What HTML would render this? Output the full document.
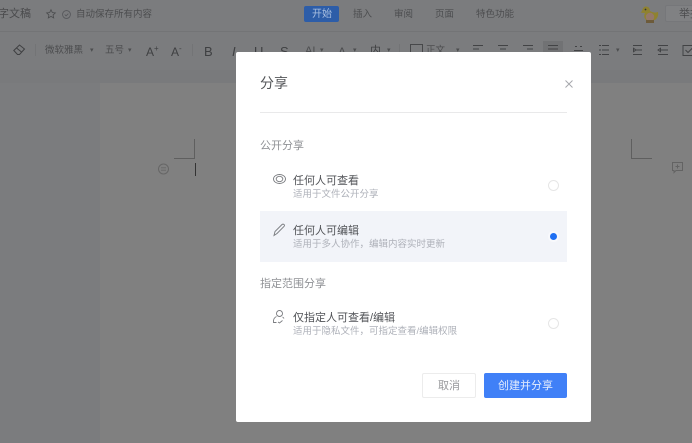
<!DOCTYPE html>
<html lang="zh"><head><meta charset="utf-8"><title>分享</title>
<style>
html,body{margin:0;padding:0;width:692px;height:443px;overflow:hidden;background:#7b7c7e}
body{position:relative;font-family:"Liberation Sans","Noto Sans CJK SC",sans-serif}
.t{position:absolute;white-space:nowrap;line-height:1}
.d{color:#4c4d4f}
svg{position:absolute;overflow:visible}
.m{position:absolute;left:236px;top:52px;width:355px;height:370px;background:#fff;border-radius:2px}
.m .t{position:absolute}
.radio{position:absolute;width:9px;height:9px;border:1px solid #e6e6e6;border-radius:50%;background:#fff}
</style></head><body>
<!-- header -->
<div style="position:absolute;left:0;top:31px;width:692px;height:1px;background:#737476"></div>
<div style="position:absolute;left:0;top:70px;width:692px;height:13px;background:#797a7c"></div>
<div class="t" style="left:-2px;top:9px;font-size:11px;color:#4a4b4d">字文稿</div>
<svg style="left:46px;top:9px" width="10" height="10" viewBox="0 0 13 13" fill="none" stroke="#4c4d4f" stroke-width="1.100"><path d="M6.500 1l1.700 3.600 3.900.5-2.900 2.600.8 3.900-3.500-2-3.500 2 .8-3.900-2.900-2.600 3.900-.5z"/></svg>
<svg style="left:62px;top:10px" width="9" height="9" viewBox="0 0 11 11" fill="none" stroke="#55565a" stroke-width="1"><circle cx="5.500" cy="5.500" r="4.800"/><path d="M3.300 5.500l1.700 1.700 2.700-2.700"/></svg>
<div class="t d" style="left:76px;top:10px;font-size:9.500px">自动保存所有内容</div>
<div style="position:absolute;left:304px;top:6px;width:35px;height:16px;background:#2d5da8;border-radius:2px"></div>
<div class="t" style="left:312px;top:10px;font-size:10px;color:#a9bfe0">开始</div>
<div class="t d" style="left:353px;top:10px;font-size:9.500px">插入</div>
<div class="t d" style="left:394px;top:10px;font-size:9.500px">审阅</div>
<div class="t d" style="left:435px;top:10px;font-size:9.500px">页面</div>
<div class="t d" style="left:476px;top:10px;font-size:9.500px">特色功能</div>
<svg style="left:640px;top:5px" width="20" height="19" viewBox="0 0 20 19"><path d="M2 6Q3 1 6.500 1.500T10 6q4 2.500 8 1 1 5-3 8H6Q3 12 5 8 3 8 .5 7.500z" fill="#8f8230"/><circle cx="10" cy="12" r="4.200" fill="#94786a"/><rect x="6" y="15" width="8" height="3" fill="#6d5b3a"/><circle cx="5.500" cy="4.500" r=".9" fill="#333"/></svg>
<div style="position:absolute;left:665px;top:5px;width:30px;height:17px;background:#808183;border:1px solid #76777a;box-sizing:border-box;border-radius:2px"></div>
<div class="t d" style="left:679px;top:9px;font-size:11px">举报</div>
<!-- toolbar -->
<svg style="left:13px;top:44px" width="13" height="12" viewBox="0 0 13 12" fill="none" stroke="#3f4042" stroke-width="1"><path d="M.8 6.500L6.500 1l5 4-5 5.500H4.500z M3.500 4l5 4"/></svg>
<div style="position:absolute;left:35px;top:44px;width:1px;height:12px;background:#737476"></div>
<div class="t d" style="left:45px;top:46px;font-size:9.500px">微软雅黑</div>
<div class="t d" style="left:90px;top:47px;font-size:7px">▾</div>
<div class="t d" style="left:105px;top:46px;font-size:9.500px">五号</div>
<div class="t d" style="left:128px;top:47px;font-size:7px">▾</div>
<div class="t" style="left:146px;top:46px;font-size:12px;color:#3f4042">A<sup style="font-size:8px;line-height:0">+</sup></div>
<div class="t" style="left:171px;top:46px;font-size:12px;color:#3f4042">A<sup style="font-size:8px;line-height:0">-</sup></div>
<div style="position:absolute;left:192px;top:44px;width:1px;height:12px;background:#737476"></div>
<div class="t" style="left:204px;top:45px;font-size:13px;color:#3f4042">B</div>
<div class="t" style="left:232px;top:45px;font-size:13px;color:#3f4042;font-style:italic">I</div>
<div class="t" style="left:254px;top:45px;font-size:13px;color:#3f4042">U</div>
<div class="t" style="left:280px;top:45px;font-size:13px;color:#3f4042">S</div>
<div class="t d" style="left:305px;top:46px;font-size:11px">AI</div>
<div class="t d" style="left:320px;top:47px;font-size:7px">▾</div>
<div class="t d" style="left:338px;top:46px;font-size:12px">A</div>
<div class="t d" style="left:353px;top:47px;font-size:7px">▾</div>
<div class="t" style="left:370px;top:46px;font-size:11px;color:#3f4042">内</div>
<div class="t d" style="left:387px;top:47px;font-size:7px">▾</div>
<div style="position:absolute;left:399px;top:44px;width:1px;height:8px;background:#737476"></div>
<div style="position:absolute;left:410px;top:44px;width:11px;height:9px;border:1px solid #47484a"></div>
<div class="t d" style="left:426px;top:46px;font-size:9.500px">正文</div>
<div class="t d" style="left:456px;top:47px;font-size:7px">▾</div>
<div style="position:absolute;left:543px;top:41px;width:20px;height:12px;background:#717274"></div>
<svg style="left:472px;top:44px" width="220" height="14" viewBox="0 0 220 14" fill="none" stroke="#424345" stroke-width="1">
<path d="M1 1.500h10M1 5h6M1 8.500h10"/>
<path d="M26 1.500h10M28 5h6M26 8.500h10"/>
<path d="M51 1.500h10M55 5h6M51 8.500h10"/>
<path d="M76 1.500h10M76 5h10M76 8.500h10"/>
<path d="M102 6.500h9M103 2.500h2M108 2.500h2M103 10h2M108 10h2"/>
<path d="M130 1.500h7M130 6h7M130 10.500h7M127 1.500h2M127 6h2M127 10.500h2"/>
<path d="M161 1.500h9M164 6h6M161 10.500h9M164 6l-2.500-1.700v3.400z"/>
<path d="M186 1.500h10M189 6h7M186 10.500h10M186 6l2.500-1.700v3.400z"/>
<path d="M211 1.500h11v10h-11zM213.500 6l2.500 2.500 5-5"/>
</svg>
<div class="t d" style="left:616px;top:47px;font-size:7px">▾</div>
<!-- doc page -->
<div style="position:absolute;left:100px;top:83px;width:592px;height:360px;background:#808080"></div>
<div style="position:absolute;left:174px;top:158px;width:20px;height:1px;background:#5f5f5f"></div>
<div style="position:absolute;left:194px;top:139px;width:1px;height:20px;background:#5f5f5f"></div>
<div style="position:absolute;left:631px;top:139px;width:1px;height:20px;background:#5f5f5f"></div>
<div style="position:absolute;left:631px;top:158px;width:21px;height:1px;background:#5f5f5f"></div>
<div style="position:absolute;left:195px;top:163px;width:1px;height:13px;background:#333"></div>
<svg style="left:158px;top:163px" width="12" height="12" viewBox="0 0 12 12" fill="none" stroke="#666" stroke-width="1"><circle cx="5.500" cy="6" r="5"/><path d="M3 4.800h5M3 7.200h5" stroke-width=".8"/></svg>
<svg style="left:672px;top:162px" width="11" height="13" viewBox="0 0 11 13" fill="none" stroke="#636363" stroke-width="1"><path d="M.5 .500h10v8H4l-2 2v-2H.5zM5.500 2.500v4M3.500 4.500h4"/></svg>
<!-- modal -->
<div class="m">
<div class="t" style="left:24px;top:24px;font-size:14px;color:#545659">分享</div>
<svg style="left:329px;top:28px" width="8" height="8" viewBox="0 0 8 8" fill="none" stroke="#a6a8ac" stroke-width="1"><path d="M.5 .500l7 7M7.500 .500l-7 7"/></svg>
<div style="position:absolute;left:24px;top:60px;width:307px;height:1px;background:#e9e9ea"></div>
<div class="t" style="left:24px;top:89px;font-size:11px;color:#8f9195">公开分享</div>
<svg style="left:37px;top:122px" width="13" height="10" viewBox="0 0 13 10" fill="none" stroke="#7a7c80" stroke-width=".9"><ellipse cx="6.500" cy="5" rx="6" ry="4.500"/><ellipse cx="6.500" cy="5" rx="3.300" ry="2.700"/></svg>
<div class="t" style="left:57px;top:124px;font-size:11px;color:#515357">任何人可查看</div>
<div class="t" style="left:57px;top:138px;font-size:9.500px;color:#aeb1b9">适用于文件公开分享</div>
<div class="radio" style="left:312px;top:128px"></div>
<div style="position:absolute;left:24px;top:159px;width:307px;height:51px;background:#f2f4f9"></div>
<svg style="left:37px;top:171px" width="13" height="13" viewBox="0 0 13 13" fill="none" stroke="#7a7c80" stroke-width=".9"><path d="M1 12.500L2 8.500 9 1.500q1-.8 2 0t0 2L4 10.500z"/></svg>
<div class="t" style="left:57px;top:174px;font-size:11px;color:#515357">任何人可编辑</div>
<div class="t" style="left:57px;top:188px;font-size:9.500px;color:#aeb1b9">适用于多人协作&#xFF0C;编辑内容实时更新</div>
<div style="position:absolute;left:312px;top:179px;width:11px;height:11px;border-radius:50%;background:#f8f9fc"></div>
<div style="position:absolute;left:314px;top:181px;width:7px;height:7px;border-radius:50%;background:#1f6ff2"></div>
<div class="t" style="left:24px;top:227px;font-size:11px;color:#8f9195">指定范围分享</div>
<svg style="left:36px;top:258px" width="14" height="14" viewBox="0 0 14 14" fill="none" stroke="#7a7c80" stroke-width=".9"><circle cx="7.500" cy="3.500" r="3"/><path d="M4.500 6.500Q1 8 1.500 12.500h3M6 12l1.500 1 3-2.500M10.500 7q1 .5 1.500 1.500"/></svg>
<div class="t" style="left:57px;top:261px;font-size:11px;color:#515357">仅指定人可查看/编辑</div>
<div class="t" style="left:57px;top:275px;font-size:9.500px;color:#aeb1b9">适用于隐私文件&#xFF0C;可指定查看/编辑权限</div>
<div class="radio" style="left:312px;top:266px"></div>
<div style="position:absolute;left:186px;top:321px;width:52px;height:23px;border:1px solid #ececec;border-radius:2px"></div>
<div class="t" style="left:202px;top:329px;font-size:11px;color:#98999c">取消</div>
<div style="position:absolute;left:248px;top:321px;width:83px;height:25px;background:#4080f7;border-radius:2px"></div>
<div class="t" style="left:262px;top:329px;font-size:11px;color:#e6eefd">创建并分享</div>
</div>
</body></html>
